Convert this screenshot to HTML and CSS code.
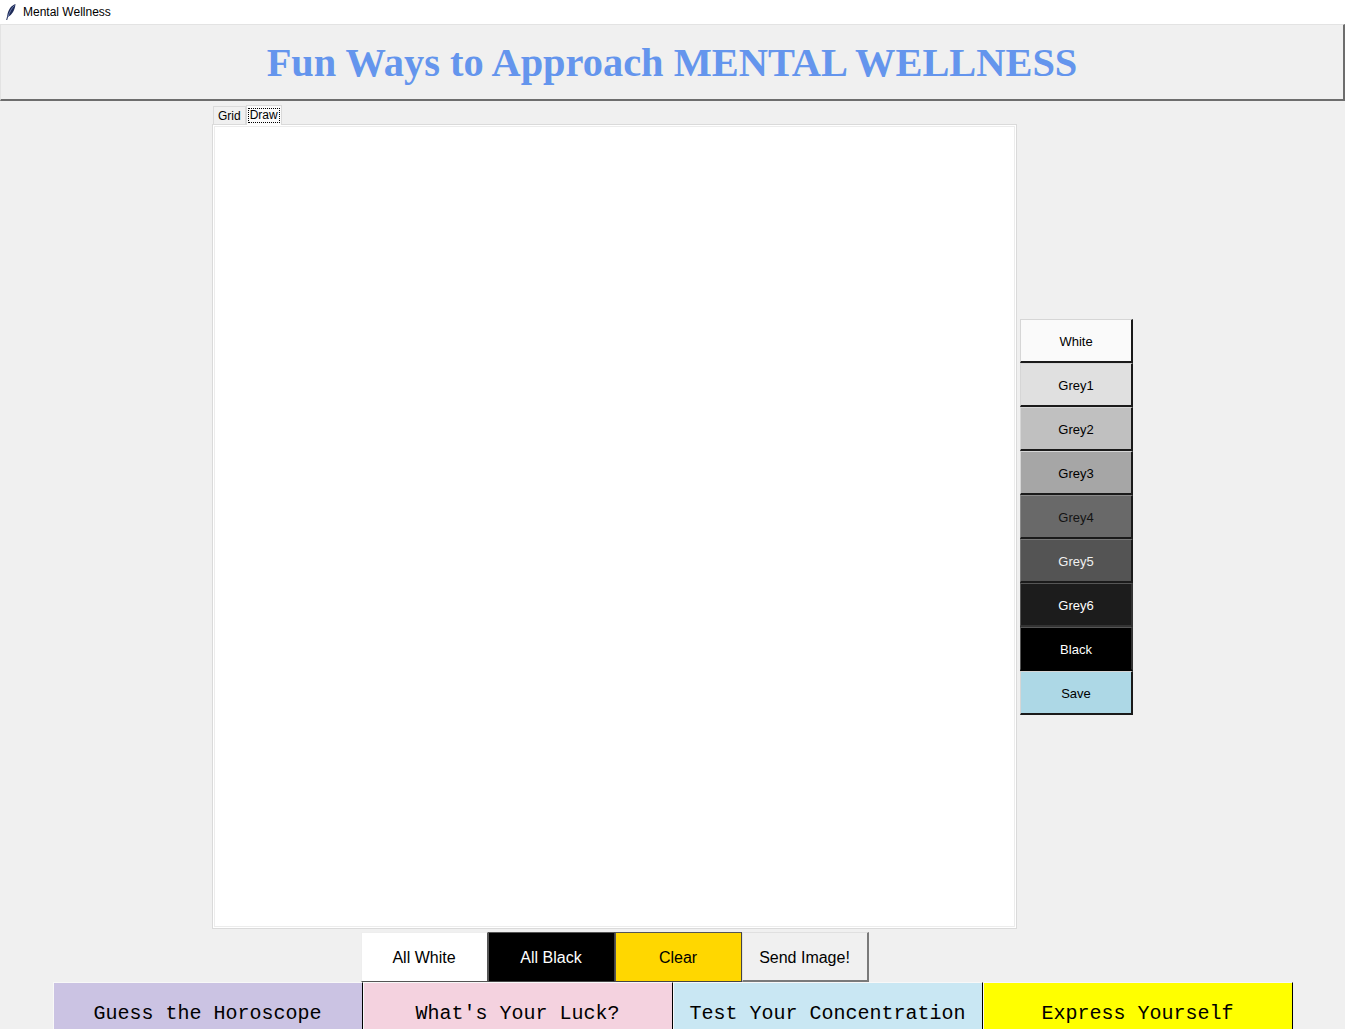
FILE: index.html
```html
<!DOCTYPE html>
<html>
<head>
<meta charset="utf-8">
<title>Mental Wellness</title>
<link rel="stylesheet" href="styles.css">
</head>
<body>
<div class="titlebar">
  <svg class="feather" width="12" height="18" viewBox="0 0 12 18">
    <path d="M10.5 1 C6 2.5 3 7 2.2 13 L1.2 17 L2.2 17 L3 14 C7 12 10 7 10.5 1 Z" fill="#1d2a57"/>
    <path d="M9.5 2.5 C6.5 5 4.5 9 3 14" stroke="#8fa0d0" stroke-width="0.7" fill="none"/>
  </svg>
  <span class="apptitle">Mental Wellness</span>
</div>

<div class="header">
  <h1 class="headline">Fun Ways to Approach MENTAL WELLNESS</h1>
</div>

<div class="main">
  <div class="notebook">
    <div class="tabs">
      <div class="tab">Grid</div>
      <div class="tab tab-active"><span class="focus">Draw</span></div>
    </div>
    <div class="pane">
      <div class="canvas"></div>
    </div>
  </div>

  <div class="palette">
    <button class="swatch sw-white">White</button>
    <button class="swatch sw-grey1">Grey1</button>
    <button class="swatch sw-grey2">Grey2</button>
    <button class="swatch sw-grey3">Grey3</button>
    <button class="swatch sw-grey4">Grey4</button>
    <button class="swatch sw-grey5">Grey5</button>
    <button class="swatch sw-grey6">Grey6</button>
    <button class="swatch sw-black">Black</button>
    <button class="swatch sw-save">Save</button>
  </div>

  <div class="actions">
    <button class="action act-white">All White</button>
    <button class="action act-black">All Black</button>
    <button class="action act-clear">Clear</button>
    <button class="action act-send">Send Image!</button>
  </div>
</div>

<div class="launchers">
  <button class="launch l-horo">Guess the Horoscope</button>
  <button class="launch l-luck">What's Your Luck?</button>
  <button class="launch l-conc">Test Your Concentration</button>
  <button class="launch l-expr">Express Yourself</button>
</div>
</body>
</html>
```

FILE: styles.css
```css
html, body {
  margin: 0;
  padding: 0;
}
body {
  width: 1345px;
  height: 1029px;
  overflow: hidden;
  background: #f0f0f0;
  font-family: "Liberation Sans", Arial, sans-serif;
}

.titlebar {
  height: 24px;
  background: #ffffff;
  display: flex;
  align-items: center;
  padding-left: 5px;
  box-sizing: border-box;
}
.feather {
  display: block;
  margin-right: 6px;
}
.apptitle {
  font-family: "Liberation Sans", Arial, sans-serif;
  font-size: 12px;
  color: #000;
}

.header {
  height: 77px;
  box-sizing: border-box;
  background: #f0f0f0;
  border-top: 1px solid #e3e3e3;
  border-left: 1px solid #e3e3e3;
  border-right: 2px solid #6d6d6d;
  border-bottom: 2px solid #6d6d6d;
  display: flex;
  align-items: center;
  justify-content: center;
  padding-top: 2px;
}
.headline {
  margin: 0;
  font-family: "Liberation Serif", "Times New Roman", serif;
  font-weight: bold;
  font-size: 40.4px;
  color: #6495ed;
  line-height: 1;
}

.main {
  display: grid;
  grid-template-columns: 805px 113px;
  column-gap: 3px;
  justify-content: center;
  margin-top: 3px;
}

.notebook {
  grid-column: 1;
  grid-row: 1;
  display: flex;
  flex-direction: column;
}
.tabs {
  height: 20px;
  display: flex;
  align-items: flex-end;
  padding-left: 1px;
}
.tab {
  font-family: "Liberation Sans", Arial, sans-serif;
  font-size: 12px;
  height: 18px;
  box-sizing: border-box;
  padding: 0 4px;
  line-height: 18px;
  border: 1px solid #dadada;
  border-bottom: none;
  background: #f0f0f0;
  color: #000;
}
.tab-active {
  height: 20px;
  background: #fbfbfb;
  padding: 1px 1px 0 1px;
  line-height: 16px;
  margin-bottom: -1px;
  position: relative;
  z-index: 1;
}
.focus {
  display: inline-block;
  border: 1px dotted #000;
  padding: 0 1px;
  line-height: 13px;
}
.pane {
  height: 805px;
  box-sizing: border-box;
  border: 1px solid #dadada;
  background: #ffffff;
  padding: 1px;
}
.canvas {
  height: 100%;
  box-sizing: border-box;
  border: 1px solid #ececec;
  background: #ffffff;
}

.palette {
  grid-column: 2;
  grid-row: 1;
  align-self: center;
  display: flex;
  flex-direction: column;
}
.swatch {
  height: 44px;
  width: 113px;
  margin: 0;
  padding: 2px 0 0 0;
  box-sizing: border-box;
  font-family: "Liberation Sans", Arial, sans-serif;
  font-size: 13px;
  border-style: solid;
  border-width: 1px 2px 2px 1px;
  border-color: #d6d6d6 #1a1a1a #1a1a1a #d6d6d6;
  color: #000;
}
.sw-white { background: #fafafa; }
.sw-grey1 { background: #e0e0e0; }
.sw-grey2 { background: #c0c0c0; }
.sw-grey3 { background: #a6a6a6; }
.sw-grey4 { background: #696969; color: #141414; border-color: #8a8a8a #1a1a1a #1a1a1a #8a8a8a; }
.sw-grey5 { background: #545454; color: #f0f0f0; border-color: #777 #1a1a1a #1a1a1a #777; }
.sw-grey6 { background: #1c1c1c; color: #ffffff; border-color: #555 #333 #333 #555; }
.sw-black { background: #000000; color: #ffffff; border-color: #555 #333 #000 #555; }
.sw-save  { background: #add8e6; }

.actions {
  grid-column: 1;
  grid-row: 2;
  display: flex;
  justify-content: center;
  margin-top: 3px;
}
.action {
  width: 127px;
  height: 50px;
  margin: 0;
  padding: 2px 0 0 0;
  box-sizing: border-box;
  font-family: "Liberation Sans", Arial, sans-serif;
  font-size: 16px;
  border-style: solid;
  border-width: 1px;
  border-color: #e8e8e8 #555 #555 #e8e8e8;
  color: #000;
}
.act-white { background: #ffffff; border-color: #eee #555 #555 #eee; }
.act-black { background: #000000; color: #ffffff; border-color: #555 #444 #444 #555; }
.act-clear { background: #ffd700; border-color: #555 #444 #444 #555; }
.act-send  { background: #f0f0f0; border-width: 1px 2px 2px 1px; border-color: #e0e0e0 #7a7a7a #7a7a7a #e0e0e0; }

.launchers {
  display: flex;
  justify-content: center;
}
.launch {
  width: 310px;
  height: 62px;
  margin: 0;
  padding: 0;
  box-sizing: border-box;
  font-family: "Liberation Mono", "Courier New", monospace;
  font-size: 20px;
  color: #000;
  border-style: solid;
  border-width: 1px;
  border-color: #f8f8f8 #000 #000 #f8f8f8;
}
.l-horo { background: #cbc3e3; }
.l-luck { background: #f4d2df; }
.l-conc { background: #c9e7f3; }
.l-expr { background: #ffff00; }
```
